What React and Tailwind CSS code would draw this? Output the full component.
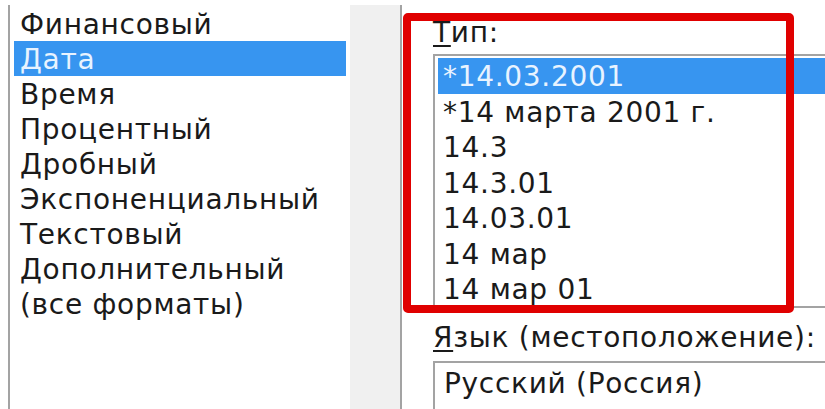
const categories = [
  "Финансовый",
  "Дата",
  "Время",
  "Процентный",
  "Дробный",
  "Экспоненциальный",
  "Текстовый",
  "Дополнительный",
  "(все форматы)",
];

const types = [
  "*14.03.2001",
  "*14 марта 2001 г.",
  "14.3",
  "14.3.01",
  "14.03.01",
  "14 мар",
  "14 мар 01",
];

const font = { fontFamily: '"DejaVu Sans", Tahoma, sans-serif' };

export default function App() {
  return (
    <div
      className="relative w-[825px] h-[409px] overflow-hidden bg-white text-[28px] text-[#1a1a1a]"
      style={font}
    >
      <div className="flex h-full">
        {/* Category list */}
        <div className="ml-[8px] mt-[5px] flex h-[404px] border-l-2 border-r-2 border-[#a3a3a3]">
          <ul className="w-[340px] pl-[4px] pt-[1px]">
            {categories.map((c, i) => (
              <li
                key={c}
                className={
                  "h-[35px] w-[332px] pl-[6px] leading-[37px] whitespace-nowrap tracking-[0.7px] " +
                  (i === 1 ? "bg-[#3795f0] text-[#e8f3ff]" : "")
                }
              >
                {c}
              </li>
            ))}
          </ul>
          <div className="w-[50px] bg-[#f0f0f0]" />
        </div>

        {/* Type panel */}
        <div className="flex-1 pl-[31px] pt-[14px]">
          <div className="h-[40px] leading-[38px] tracking-[0.7px]">
            <span className="underline underline-offset-[3px]">Т</span>ип:
          </div>
          <div className="h-[254px] border-2 border-r-0 border-[#a3a3a3] pt-[2px] pl-[3px]">
            {types.map((t, i) => (
              <div
                key={t}
                className={
                  "h-[35.5px] pl-[5px] leading-[37px] whitespace-nowrap tracking-[0.7px] " +
                  (i === 0 ? "bg-[#3795f0] text-[#e8f3ff]" : "")
                }
              >
                {t}
              </div>
            ))}
          </div>
          <div className="mt-[9px] h-[44px] leading-[42px] whitespace-nowrap tracking-[0.7px]">
            <span className="underline underline-offset-[3px]">Я</span>зык (местоположение):
          </div>
          <div className="h-[50px] border-2 border-r-0 border-[#a3a3a3] pl-[9px] leading-[42px] whitespace-nowrap tracking-[0.7px]">
            Русский (Россия)
          </div>
        </div>
      </div>

      {/* Red annotation frame over the type list */}
      <div className="absolute left-[403px] top-[13px] h-[300px] w-[391px] rounded-[5px] border-[8px] border-[#e00000]" />
    </div>
  );
}
